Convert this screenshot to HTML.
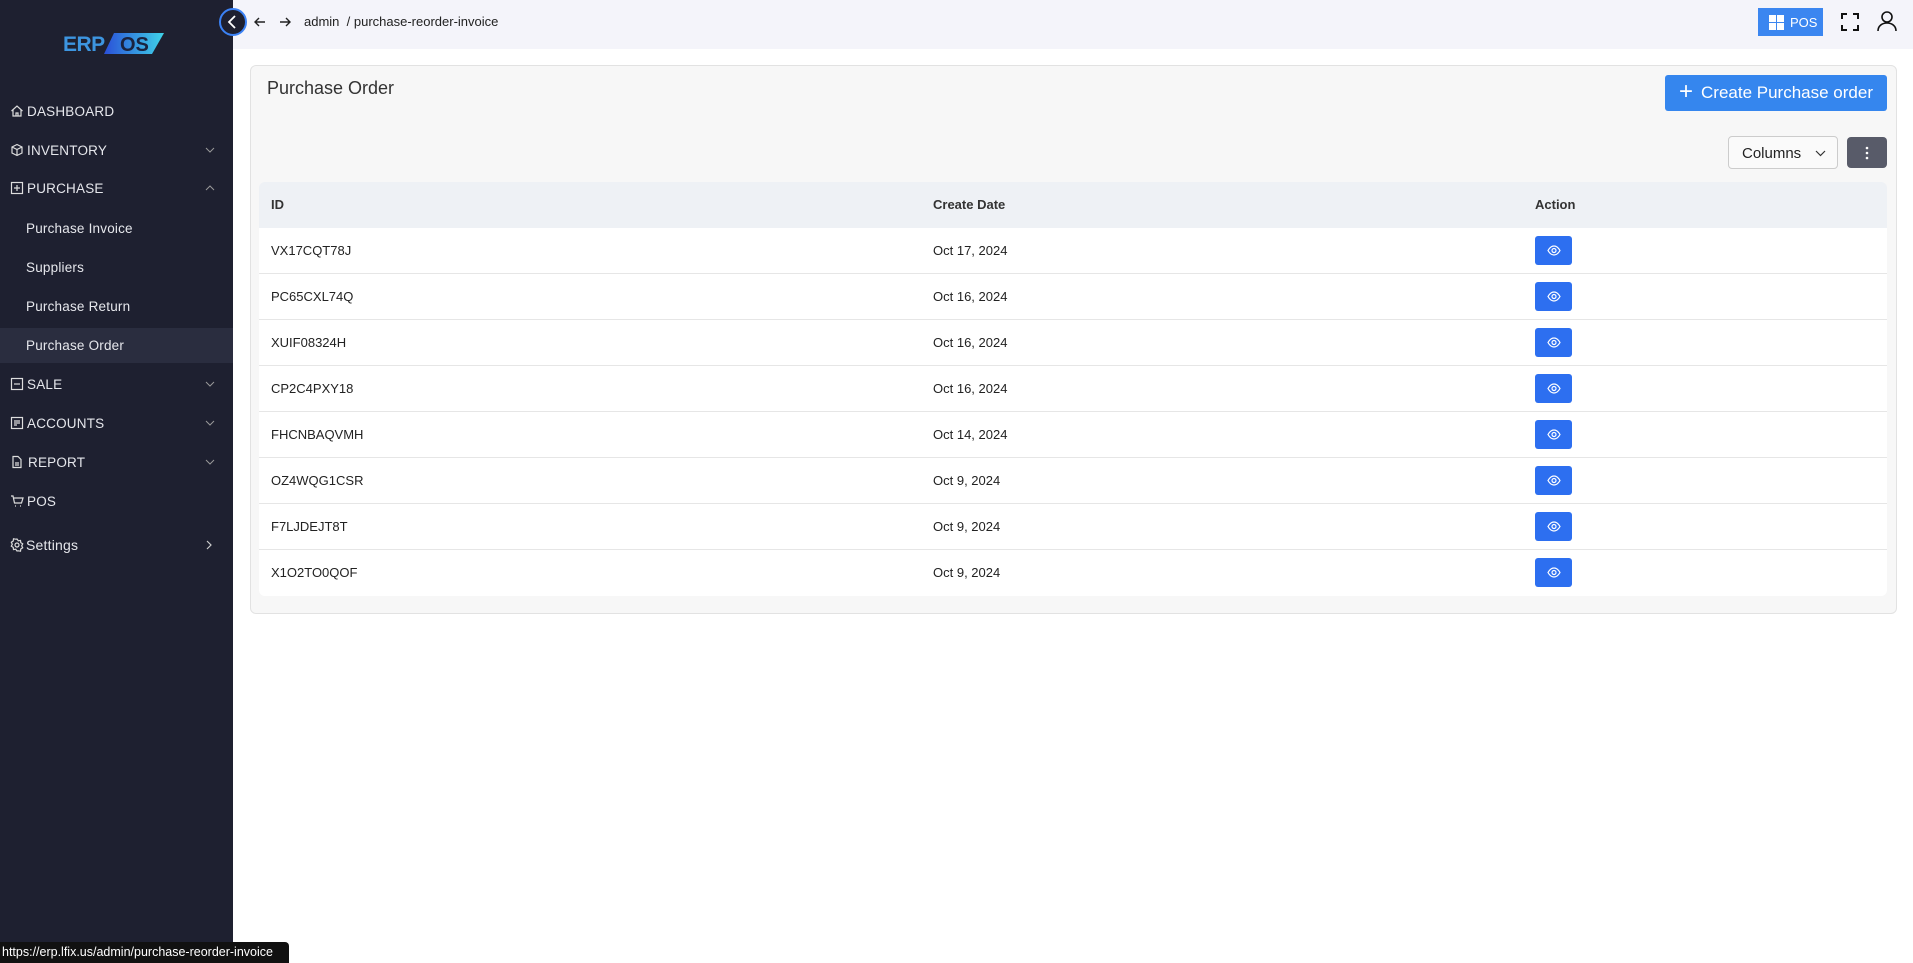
<!DOCTYPE html>
<html><head><meta charset="utf-8">
<style>
*{box-sizing:border-box;margin:0;padding:0}
body{width:1913px;height:963px;overflow:hidden;background:#fff;font-family:"Liberation Sans",sans-serif;position:relative;color:#222}
#sb{position:absolute;left:0;top:0;width:233px;height:963px;background:#1e2030}
.mi{position:absolute;left:0;width:233px;height:38px;display:flex;align-items:center;color:#e6e7ec;font-size:13.5px;letter-spacing:.2px}
.mi svg{position:absolute;left:10px}
.mi .t{position:absolute;left:27px}
.mi .sub{position:absolute;left:26px}
.mi .ch{position:absolute;left:205px}
#top{position:absolute;left:233px;top:0;right:0;height:49px;background:#f4f4fa}
#card{position:absolute;left:250px;top:65px;width:1647px;height:549px;background:#f7f7f7;border:1px solid #e2e2e2;border-radius:6px}
.row{position:absolute;left:259px;width:1628px;height:46px;background:#fff;border-bottom:1px solid #e6e6e6;font-size:13px;color:#222}
.row span{position:absolute;top:15px}
.eye{position:absolute;left:1276px;top:8px;width:37px;height:29px;background:#2d6ff0;border-radius:3px}
</style></head><body>
<div id="sb">
 <div style="position:absolute;left:63px;top:33px;font:bold 21px 'Liberation Sans',sans-serif;color:#3d95e0;letter-spacing:-.5px">ERP</div>
 <svg style="position:absolute;left:104px;top:33px" width="60" height="22"><defs><linearGradient id="g" x1="0" x2="1"><stop offset="0" stop-color="#2a4fd8"/><stop offset="1" stop-color="#3fd3e8"/></linearGradient></defs><polygon points="10,0 60,0 48,21 0,21" fill="url(#g)"/><text x="16" y="18" font-family="Liberation Sans" font-weight="bold" font-size="20" fill="#1a2340">OS</text></svg>

 <div class="mi" style="top:92px"><svg width="14" height="14" viewBox="0 0 14 14" fill="none" stroke="#ddd" stroke-width="1.2"><path d="M1.5 7L7 2l5.5 5M3 6v6h8V6M6 12V9h2v3"/></svg><span class="t">DASHBOARD</span></div>
 <div class="mi" style="top:131px"><svg width="14" height="14" viewBox="0 0 14 14" fill="none" stroke="#ddd" stroke-width="1.2"><path d="M7 1.5l5 2.5v6L7 12.5 2 10V4zM2 4l5 2.5L12 4M7 6.5v6"/></svg><span class="t">INVENTORY</span><svg class="ch" width="10" height="8" viewBox="0 0 10 8" fill="none" stroke="#999" stroke-width="1"><path d="M1 2l4 4 4-4"/></svg></div>
 <div class="mi" style="top:169px"><svg width="14" height="14" viewBox="0 0 14 14" fill="none" stroke="#ddd" stroke-width="1.2"><rect x="1.5" y="1.5" width="11" height="11"/><path d="M7 4v6M4 7h6"/></svg><span class="t">PURCHASE</span><svg class="ch" width="10" height="8" viewBox="0 0 10 8" fill="none" stroke="#999" stroke-width="1"><path d="M1 6l4-4 4 4"/></svg></div>
 <div class="mi" style="top:209px"><span class="sub">Purchase Invoice</span></div>
 <div class="mi" style="top:248px"><span class="sub">Suppliers</span></div>
 <div class="mi" style="top:287px"><span class="sub">Purchase Return</span></div>
 <div class="mi" style="top:328px;height:35px;background:#2a2d3f"><span class="sub">Purchase Order</span></div>
 <div class="mi" style="top:365px"><svg width="14" height="14" viewBox="0 0 14 14" fill="none" stroke="#ddd" stroke-width="1.2"><rect x="1.5" y="1.5" width="11" height="11"/><path d="M4 7h6"/></svg><span class="t">SALE</span><svg class="ch" width="10" height="8" viewBox="0 0 10 8" fill="none" stroke="#999" stroke-width="1"><path d="M1 2l4 4 4-4"/></svg></div>
 <div class="mi" style="top:404px"><svg width="14" height="14" viewBox="0 0 14 14" fill="none" stroke="#ddd" stroke-width="1.2"><rect x="1.5" y="1.5" width="11" height="11"/><path d="M4 5h6M4 7h6M4 9h3"/></svg><span class="t">ACCOUNTS</span><svg class="ch" width="10" height="8" viewBox="0 0 10 8" fill="none" stroke="#999" stroke-width="1"><path d="M1 2l4 4 4-4"/></svg></div>
 <div class="mi" style="top:443px"><svg width="14" height="14" viewBox="0 0 14 14" fill="none" stroke="#ddd" stroke-width="1.2"><path d="M3 1.5h5l3 3v8H3zM5 8h4M5 10h4"/></svg><span class="t" style="left:28px">REPORT</span><svg class="ch" width="10" height="8" viewBox="0 0 10 8" fill="none" stroke="#999" stroke-width="1"><path d="M1 2l4 4 4-4"/></svg></div>
 <div class="mi" style="top:482px"><svg width="14" height="14" viewBox="0 0 14 14" fill="none" stroke="#ddd" stroke-width="1.2"><path d="M1 2h2l1.5 7h7L13 4H4M5 12h1M10 12h1"/></svg><span class="t">POS</span></div>
 <div class="mi" style="top:526px;font-size:14px"><svg width="14" height="14" viewBox="0 0 14 14" fill="none" stroke="#ddd" stroke-width="1.2"><circle cx="7" cy="7" r="2"/><path d="M7 1l1.3 1.8 2.2-.4.3 2.2 1.9 1.2-1 2 1 2-1.9 1.2-.3 2.2-2.2-.4L7 13l-1.3-1.8-2.2.4-.3-2.2L1.3 8.2l1-2-1-2 1.9-1.2.3-2.2 2.2.4z"/></svg><span class="t" style="left:26px">Settings</span><svg class="ch" width="8" height="10" viewBox="0 0 8 10" fill="none" stroke="#ccc" stroke-width="1.2"><path d="M2 1l4 4-4 4"/></svg></div>
</div>
<div id="top"></div>
<svg style="position:absolute;left:218px;top:7px" width="30" height="30"><circle cx="15" cy="15" r="13" fill="#1e2030" stroke="#3b82f6" stroke-width="2"/><path d="M17 9l-6 6 6 6" fill="none" stroke="#fff" stroke-width="1.8"/></svg>
<svg style="position:absolute;left:253px;top:15px" width="14" height="14" viewBox="0 0 14 14" fill="none" stroke="#222" stroke-width="1.4"><path d="M12 7H2M6 3L2 7l4 4"/></svg>
<svg style="position:absolute;left:278px;top:15px" width="14" height="14" viewBox="0 0 14 14" fill="none" stroke="#222" stroke-width="1.4"><path d="M2 7h10M8 3l4 4-4 4"/></svg>
<div style="position:absolute;left:304px;top:14px;font-size:13px;color:#222">admin &nbsp;/ purchase-reorder-invoice</div>
<div style="position:absolute;left:1758px;top:8px;width:65px;height:28px;background:#3b86f0;color:#fff;font-size:13px;display:flex;align-items:center"><svg style="margin:0 6px 0 11px" width="15" height="15"><rect x="0" y="0" width="7" height="7" fill="#fff"/><rect x="8" y="0" width="7" height="7" fill="#fff"/><rect x="0" y="8" width="7" height="7" fill="#fff"/><rect x="8" y="8" width="7" height="7" fill="#fff"/></svg>POS</div>
<svg style="position:absolute;left:1840px;top:12px" width="20" height="20" viewBox="0 0 20 20" fill="none" stroke="#111" stroke-width="2"><path d="M2 7V2h5M13 2h5v5M18 13v5h-5M7 18H2v-5"/></svg>
<svg style="position:absolute;left:1876px;top:10px" width="22" height="22" viewBox="0 0 22 22" fill="none" stroke="#111" stroke-width="1.6"><circle cx="11" cy="7" r="5"/><path d="M2 21c0-5 4-8 9-8s9 3 9 8"/></svg>

<div id="card"></div>
<div style="position:absolute;left:267px;top:78px;font-size:18px;color:#333">Purchase Order</div>
<div style="position:absolute;left:1665px;top:75px;width:222px;height:36px;background:#3586ee;border-radius:3px;color:#fff;font-size:17px;display:flex;align-items:center;justify-content:center"><span style="font-size:24px;font-weight:300;margin-right:8px;margin-top:-3px">+</span>Create Purchase order</div>
<div style="position:absolute;left:1728px;top:136px;width:110px;height:33px;background:#fafafa;border:1px solid #ccc;border-radius:4px;font-size:15px;color:#222;padding:8px 0 0 13px">Columns<svg style="position:absolute;left:86px;top:13px" width="11" height="7" fill="none" stroke="#333" stroke-width="1.2"><path d="M1 1l4.5 4.5L10 1"/></svg></div>
<div style="position:absolute;left:1847px;top:137px;width:40px;height:31px;background:#585b69;border-radius:4px"><svg style="position:absolute;left:18px;top:9px" width="4" height="14"><circle cx="2" cy="2" r="1.3" fill="#fff"/><circle cx="2" cy="7" r="1.3" fill="#fff"/><circle cx="2" cy="12" r="1.3" fill="#fff"/></svg></div>

<div style="position:absolute;left:259px;top:182px;width:1628px;height:46px;background:#eef1f5;border-radius:6px 6px 0 0;font-size:13px;font-weight:bold;color:#333">
 <span style="position:absolute;left:12px;top:15px">ID</span><span style="position:absolute;left:674px;top:15px">Create Date</span><span style="position:absolute;left:1276px;top:15px">Action</span></div>

<div class="row" style="top:228px"><span style="left:12px">VX17CQT78J</span><span style="left:674px">Oct 17, 2024</span><div class="eye"><svg style="position:absolute;left:12px;top:9px" width="14" height="11" viewBox="0 0 14 11" fill="none" stroke="#fff" stroke-width="1.2"><path d="M1 5.5C3 2 5 1 7 1s4 1 6 4.5C11 9 9 10 7 10S3 9 1 5.5z"/><circle cx="7" cy="5.5" r="2"/></svg></div></div>
<div class="row" style="top:274px"><span style="left:12px">PC65CXL74Q</span><span style="left:674px">Oct 16, 2024</span><div class="eye"><svg style="position:absolute;left:12px;top:9px" width="14" height="11" viewBox="0 0 14 11" fill="none" stroke="#fff" stroke-width="1.2"><path d="M1 5.5C3 2 5 1 7 1s4 1 6 4.5C11 9 9 10 7 10S3 9 1 5.5z"/><circle cx="7" cy="5.5" r="2"/></svg></div></div>
<div class="row" style="top:320px"><span style="left:12px">XUIF08324H</span><span style="left:674px">Oct 16, 2024</span><div class="eye"><svg style="position:absolute;left:12px;top:9px" width="14" height="11" viewBox="0 0 14 11" fill="none" stroke="#fff" stroke-width="1.2"><path d="M1 5.5C3 2 5 1 7 1s4 1 6 4.5C11 9 9 10 7 10S3 9 1 5.5z"/><circle cx="7" cy="5.5" r="2"/></svg></div></div>
<div class="row" style="top:366px"><span style="left:12px">CP2C4PXY18</span><span style="left:674px">Oct 16, 2024</span><div class="eye"><svg style="position:absolute;left:12px;top:9px" width="14" height="11" viewBox="0 0 14 11" fill="none" stroke="#fff" stroke-width="1.2"><path d="M1 5.5C3 2 5 1 7 1s4 1 6 4.5C11 9 9 10 7 10S3 9 1 5.5z"/><circle cx="7" cy="5.5" r="2"/></svg></div></div>
<div class="row" style="top:412px"><span style="left:12px">FHCNBAQVMH</span><span style="left:674px">Oct 14, 2024</span><div class="eye"><svg style="position:absolute;left:12px;top:9px" width="14" height="11" viewBox="0 0 14 11" fill="none" stroke="#fff" stroke-width="1.2"><path d="M1 5.5C3 2 5 1 7 1s4 1 6 4.5C11 9 9 10 7 10S3 9 1 5.5z"/><circle cx="7" cy="5.5" r="2"/></svg></div></div>
<div class="row" style="top:458px"><span style="left:12px">OZ4WQG1CSR</span><span style="left:674px">Oct 9, 2024</span><div class="eye"><svg style="position:absolute;left:12px;top:9px" width="14" height="11" viewBox="0 0 14 11" fill="none" stroke="#fff" stroke-width="1.2"><path d="M1 5.5C3 2 5 1 7 1s4 1 6 4.5C11 9 9 10 7 10S3 9 1 5.5z"/><circle cx="7" cy="5.5" r="2"/></svg></div></div>
<div class="row" style="top:504px"><span style="left:12px">F7LJDEJT8T</span><span style="left:674px">Oct 9, 2024</span><div class="eye"><svg style="position:absolute;left:12px;top:9px" width="14" height="11" viewBox="0 0 14 11" fill="none" stroke="#fff" stroke-width="1.2"><path d="M1 5.5C3 2 5 1 7 1s4 1 6 4.5C11 9 9 10 7 10S3 9 1 5.5z"/><circle cx="7" cy="5.5" r="2"/></svg></div></div>
<div class="row" style="top:550px;border-bottom:none;border-radius:0 0 6px 6px"><span style="left:12px">X1O2TO0QOF</span><span style="left:674px">Oct 9, 2024</span><div class="eye"><svg style="position:absolute;left:12px;top:9px" width="14" height="11" viewBox="0 0 14 11" fill="none" stroke="#fff" stroke-width="1.2"><path d="M1 5.5C3 2 5 1 7 1s4 1 6 4.5C11 9 9 10 7 10S3 9 1 5.5z"/><circle cx="7" cy="5.5" r="2"/></svg></div></div>

<div style="position:absolute;left:0;top:942px;width:289px;height:21px;background:#111;border-radius:0 4px 0 0;color:#fff;font-size:12.5px;padding:3px 0 0 2px;white-space:nowrap">https://erp.lfix.us/admin/purchase-reorder-invoice</div>
</body></html>
